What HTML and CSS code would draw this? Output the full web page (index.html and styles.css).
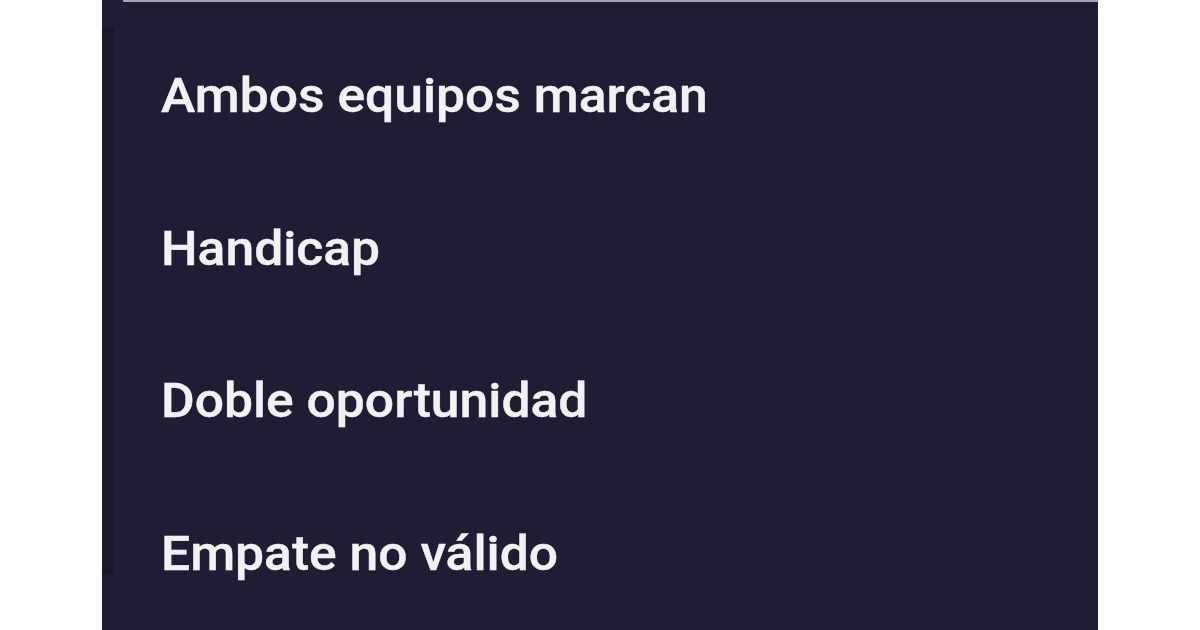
FILE: index.html
```html
<!DOCTYPE html>
<html lang="es">
<head>
<meta charset="utf-8">
<link rel="stylesheet" href="styles.css">
</head>
<body>
<div class="page">
  <div class="panel">
    <div class="topline"></div>
    <div class="edge"></div>
    <ul class="menu">
      <li class="item"><span class="label">Ambos equipos marcan</span></li>
      <li class="item"><span class="label">Handicap</span></li>
      <li class="item"><span class="label">Doble oportunidad</span></li>
      <li class="item"><span class="label">Empate no válido</span></li>
    </ul>
  </div>
</div>
</body>
</html>
```
FILE: styles.css
```css
html, body {
  margin: 0;
  padding: 0;
  background: #ffffff;
}
.page {
  width: 1200px;
  height: 630px;
  display: flex;
  padding-left: 102px;
  box-sizing: border-box;
  overflow: hidden;
}
.panel {
  width: 996px;
  height: 630px;
  background: #1d1d34;
  box-sizing: border-box;
  display: flex;
  position: relative;
}
.topline {
  position: absolute;
  left: 21px;
  right: 0;
  top: 0;
  height: 2px;
  background: #a4a4ac;
}
.edge {
  position: absolute;
  left: 0;
  top: 28px;
  width: 12px;
  height: 546px;
  background: #18182b;
}
.menu {
  list-style: none;
  margin: 0;
  padding: 19px 0 0 59px;
  display: flex;
  flex-direction: column;
}
.item {
  height: 155px;
  display: flex;
  align-items: center;
  font-family: Roboto, "Noto Sans", sans-serif;
  font-weight: 500;
  font-size: 48px;
  color: #f2f2f5;
  white-space: nowrap;
}
.label {
  display: inline-block;
  transform: scaleX(1.075);
  transform-origin: left center;
  -webkit-text-stroke: 0.4px #f2f2f5;
}
```
